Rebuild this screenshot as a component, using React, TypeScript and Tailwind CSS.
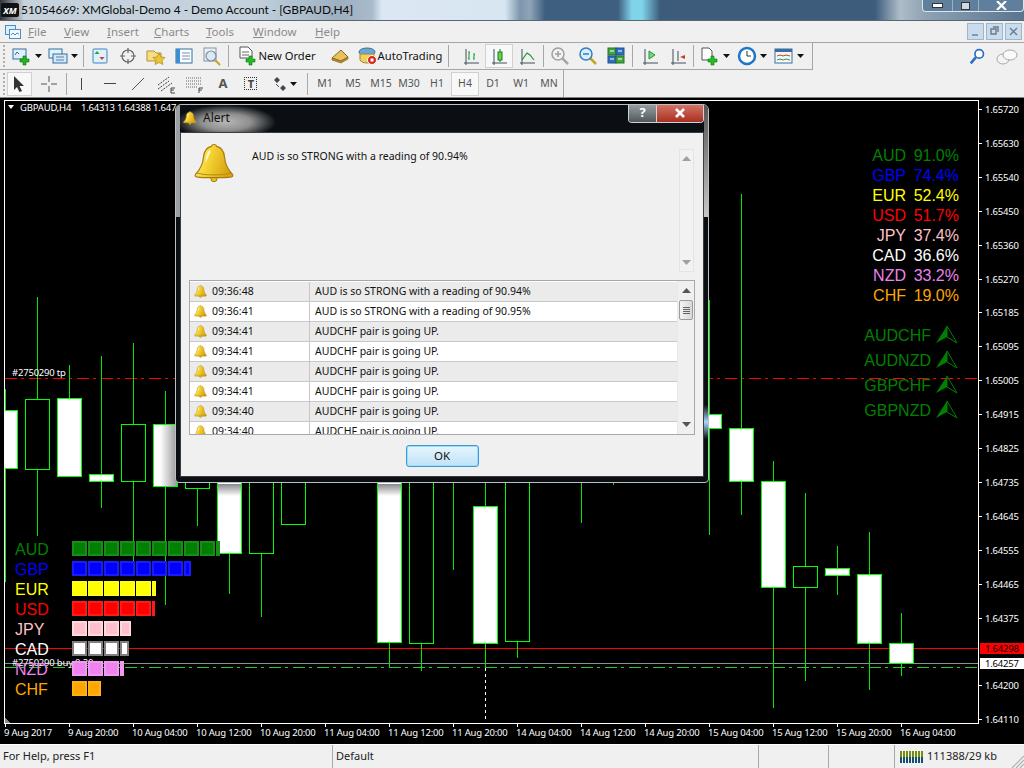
import type { ReactNode } from 'react';

const uiFont = "font-['Noto_Sans','Liberation_Sans',sans-serif]";

type Candle = [number, number, number, number, number, boolean];

// x, body top, body bottom, wick top, wick bottom, white body
const candles: Candle[] = [
  [5, 410, 468, 389, 582, true],
  [37, 399, 469, 297, 536, false],
  [69, 398, 476, 365, 476, true],
  [101, 474, 481, 356, 508, true],
  [133, 424, 481, 343, 563, false],
  [165, 424, 486, 391, 605, true],
  [197, 470, 488, 470, 526, false],
  [229, 400, 553, 400, 594, true],
  [261, 400, 553, 400, 617, false],
  [293, 400, 524, 400, 525, false],
  [389, 400, 642, 400, 668, true],
  [421, 400, 643, 400, 671, false],
  [485, 506, 643, 400, 667, true],
  [517, 400, 641, 400, 658, false],
  [709, 414, 428, 300, 535, true],
  [741, 428, 481, 194, 515, true],
  [773, 481, 587, 461, 708, true],
  [805, 566, 587, 493, 681, false],
  [837, 568, 575, 546, 595, true],
  [869, 574, 643, 532, 690, true],
  [901, 643, 663, 613, 676, true],
];

const wicksOnly: [number, number, number][] = [
  [453, 400, 570],
  [581, 400, 523],
  [613, 400, 485],
];

const prices: [string, number][] = [
  ['1.65720', 109], ['1.65630', 143], ['1.65540', 177], ['1.65450', 211], ['1.65360', 245],
  ['1.65270', 279], ['1.65185', 312], ['1.65095', 346], ['1.65005', 380], ['1.64915', 414],
  ['1.64825', 448], ['1.64735', 482], ['1.64645', 516], ['1.64555', 550], ['1.64465', 584],
  ['1.64375', 618], ['1.64200', 685], ['1.64110', 719],
];

const times: [string, number][] = [
  ['9 Aug 2017', 4], ['9 Aug 20:00', 68], ['10 Aug 04:00', 132], ['10 Aug 12:00', 196],
  ['10 Aug 20:00', 260], ['11 Aug 04:00', 324], ['11 Aug 12:00', 388], ['11 Aug 20:00', 452],
  ['14 Aug 04:00', 516], ['14 Aug 12:00', 580], ['14 Aug 20:00', 644], ['15 Aug 04:00', 708],
  ['15 Aug 12:00', 772], ['15 Aug 20:00', 836], ['16 Aug 04:00', 900],
];

const meters = [
  { name: 'AUD', end: 220, fill: '#008000', edge: '#1a8c1a', pct: '91.0%' },
  { name: 'GBP', end: 191, fill: '#0000ff', edge: '#1a1aff', pct: '74.4%' },
  { name: 'EUR', end: 156, fill: '#ffff00', edge: '#ffff1a', pct: '52.4%' },
  { name: 'USD', end: 155, fill: '#ff0000', edge: '#ff1a1a', pct: '51.7%' },
  { name: 'JPY', end: 131, fill: '#ffc0cb', edge: '#ffd8de', pct: '37.4%' },
  { name: 'CAD', end: 129, fill: '#ffffff', edge: '#808080', pct: '36.6%' },
  { name: 'NZD', end: 124, fill: '#ee82ee', edge: '#f29af2', pct: '33.2%' },
  { name: 'CHF', end: 101, fill: '#ffa500', edge: '#ffb01a', pct: '19.0%' },
];

const pairs = ['AUDCHF', 'AUDNZD', 'GBPCHF', 'GBPNZD'];

const alerts = [
  ['09:36:48', 'AUD is so STRONG with a reading of 90.94%'],
  ['09:36:41', 'AUD is so STRONG with a reading of 90.95%'],
  ['09:34:41', 'AUDCHF pair is going UP.'],
  ['09:34:41', 'AUDCHF pair is going UP.'],
  ['09:34:41', 'AUDCHF pair is going UP.'],
  ['09:34:41', 'AUDCHF pair is going UP.'],
  ['09:34:40', 'AUDCHF pair is going UP.'],
  ['09:34:40', 'AUDCHF pair is going UP.'],
];

const menus = [
  ['F', 'ile', 'w-[36px]'],
  ['V', 'iew', 'w-[43px]'],
  ['I', 'nsert', 'w-[47px]'],
  ['C', 'harts', 'w-[52px]'],
  ['T', 'ools', 'w-[47px]'],
  ['W', 'indow', 'w-[62px]'],
  ['H', 'elp', 'w-[40px]'],
];

const periods = ['M1', 'M5', 'M15', 'M30', 'H1', 'H4', 'D1', 'W1', 'MN'];

function Bell({ size }: { size: number }) {
  return (
    <svg width={size} height={size} viewBox="0 0 40 40" className="shrink-0">
      <defs>
        <linearGradient id="bellFill" x1="0" y1="0" x2="1" y2="0.3">
          <stop offset="0" stopColor="#fff3a0" />
          <stop offset="0.45" stopColor="#f6d535" />
          <stop offset="1" stopColor="#d9a412" />
        </linearGradient>
      </defs>
      <circle cx="20" cy="35.5" r="3.2" fill="#e8c030" stroke="#a67c10" strokeWidth="1" />
      <path
        d="M20 1.500c1.600 0 2.400 1 2.600 1.800C28 4.500 30 8 30.500 14c.5 6 2 11 8 17.500.8 1 .2 2-1 2.300C30 35 10 35 2.500 33.800c-1.200-.3-1.800-1.300-1-2.300C7.500 25 9 20 9.500 14 10 8 12 4.500 17.400 3.300 17.600 2.500 18.400 1.500 20 1.500z"
        fill="url(#bellFill)"
        stroke="#a67c10"
        strokeWidth="1.200"
      />
      <path d="M3 30c8 2.500 26 2.500 34 0" fill="none" stroke="#b98d14" strokeWidth="1.200" />
      <path d="M16 7c-3 2-4 6-4.500 13l5-11z" fill="#fffbe0" opacity="0.9" />
    </svg>
  );
}

function Caret() {
  return (
    <svg width="7" height="4" viewBox="0 0 7 4" className="shrink-0">
      <path d="M0 0h7L3.500 4z" fill="#111" />
    </svg>
  );
}

function Sep() {
  return <div className="w-px h-[22px] bg-[#a8a8a8] shrink-0" />;
}

function Grip() {
  return <div className="w-[2px] h-[22px] shrink-0 border-l-2 border-dotted border-[#b0b0b0]" />;
}

function Cell({ w, pressed, children }: { w: string; pressed?: boolean; children: ReactNode }) {
  return (
    <div
      className={`${w} h-[24px] shrink-0 flex items-center justify-center gap-[3px] ${
        pressed ? 'bg-[#f8f8f8] border border-[#d0d0d0]' : ''
      }`}
    >
      {children}
    </div>
  );
}

function Ico({ children, s = 20 }: { children: ReactNode; s?: number }) {
  return (
    <svg width={s} height={s} viewBox="0 0 20 20" className="shrink-0">
      {children}
    </svg>
  );
}

const greenPlus = 'M6 12h3V9h3v3h3v3h-3v3H9v-3H6z';

function PageIcon() {
  return (
    <Ico>
      <rect x="1" y="3" width="13" height="10" fill="#dff0fb" stroke="#2f6ea5" />
      <path d="M3 9l2-3 2 2" fill="none" stroke="#2f6ea5" />
      <path d={greenPlus} fill="#22b522" stroke="#0a6e0a" strokeWidth="0.600" transform="translate(2 1)" />
    </Ico>
  );
}

function ProfilesIcon() {
  return (
    <Ico>
      <rect x="1" y="3" width="13" height="9" fill="#e6f2fb" stroke="#2f6ea5" />
      <rect x="5" y="8" width="14" height="9" fill="#d5e8f8" stroke="#2f6ea5" />
      <path d="M8 11h8M8 14h8" stroke="#5a7fa5" />
    </Ico>
  );
}

function Axes({ children }: { children: ReactNode }) {
  return (
    <Ico>
      <path d="M3 17h15M5 3v16" stroke="#40505a" fill="none" />
      {children}
    </Ico>
  );
}

function Lens({ minus, dim }: { minus?: boolean; dim?: boolean }) {
  return (
    <Ico>
      <path d="M12 12l6 6" stroke={dim ? '#a8a8a8' : '#c9a227'} strokeWidth="2.500" />
      <circle cx="8" cy="8" r="6" fill={dim ? '#f2f2f2' : '#d8eefc'} stroke={dim ? '#a0a0a0' : '#2f7fc0'} strokeWidth="1.500" />
      <path d={minus ? 'M5 8h6' : 'M5 8h6M8 5v6'} stroke={dim ? '#a0a0a0' : '#2f7fc0'} strokeWidth="1.500" />
    </Ico>
  );
}

function TopRows() {
  return (
    <>
      <div className="h-[28px] shrink-0 flex items-center border-t border-[#a6a6a6]">
        <div className="h-full flex items-center border-r border-b border-[#a6a6a6] pl-[3px] w-[813px]">
          <Grip />
          <div className="w-[5px]" />
          <Cell w="w-[34px]"><PageIcon /><Caret /></Cell>
          <Cell w="w-[38px]"><ProfilesIcon /><Caret /></Cell>
          <div className="w-[1px]" />
          <Sep />
          <div className="w-[2px]" />
          <Cell w="w-[28px]">
            <Ico>
              <rect x="3" y="3" width="14" height="14" rx="1" fill="#e0f0fb" stroke="#3a86c5" />
              <path d="M7 5l2.500 3h-5z" fill="#2aa52a" />
              <path d="M12 14l2.500-3h-5z" fill="#d04020" />
            </Ico>
          </Cell>
          <Cell w="w-[28px]">
            <Ico>
              <circle cx="10" cy="10" r="6" fill="none" stroke="#666" strokeWidth="1.200" />
              <path d="M10 2v5M10 13v5M2 10h5M13 10h5" stroke="#666" strokeWidth="1.200" />
            </Ico>
          </Cell>
          <Cell w="w-[28px]">
            <Ico>
              <path d="M1 5h7l2 2h5v8H1z" fill="#f5dc85" stroke="#b5932f" />
              <path d="M13 7l2 4 4 .500-3 3 1 4-4-2-4 2 1-4-3-3 4-.500z" fill="#f0c330" stroke="#a8861d" strokeWidth="0.700" />
            </Ico>
          </Cell>
          <Cell w="w-[28px]">
            <Ico>
              <rect x="2" y="3" width="16" height="14" fill="#fff" stroke="#2f6ea5" />
              <rect x="2" y="3" width="4" height="14" fill="#3d8ed0" />
              <path d="M8 7h8M8 10h8M8 13h8" stroke="#6c93b8" />
            </Ico>
          </Cell>
          <Cell w="w-[28px]">
            <Ico>
              <rect x="2" y="2" width="12" height="13" fill="#eef2f5" stroke="#8294a5" />
              <circle cx="9" cy="10" r="5" fill="#dbe9f5" stroke="#7a8ea0" strokeWidth="1.200" />
              <path d="M13 14l5 5" stroke="#c9a227" strokeWidth="2" />
            </Ico>
          </Cell>
          <div className="w-[2px]" />
          <Sep />
          <div className="w-[4px]" />
          <Cell w="w-[88px]">
            <Ico>
              <path d="M2 1h8l4 4v7H2z" fill="#fff" stroke="#555" />
              <path d="M4 6h7M4 9h7" stroke="#666" />
              <path d={greenPlus} fill="#22c022" stroke="#0a6e0a" strokeWidth="0.600" transform="translate(2 1)" />
            </Ico>
            <span className="-ml-[3px] text-[11.200px] text-[#111] leading-none whitespace-nowrap">New Order</span>
          </Cell>
          <div className="w-[5px]" />
          <Cell w="w-[28px]">
            <Ico>
              <path d="M2 12l9-8 7 7-7 4z" fill="#e8c060" stroke="#8a6a1a" />
              <path d="M2 12l9 3 7-4v2l-7 4-9-3z" fill="#b88a30" stroke="#8a6a1a" strokeWidth="0.700" />
            </Ico>
          </Cell>
          <Cell w="w-[92px]">
            <Ico>
              <ellipse cx="9" cy="6" rx="8" ry="4" fill="#6ba8d8" stroke="#3c6e9c" />
              <path d="M2 8h14v6c-2 4-12 4-14 0z" fill="#f0cf60" stroke="#a5862a" />
              <circle cx="14" cy="14" r="4.500" fill="#d5281c" stroke="#fff" />
              <rect x="12.500" y="12.500" width="3" height="3" fill="#fff" />
            </Ico>
            <span className="-ml-[3px] text-[11.200px] text-[#111] leading-none whitespace-nowrap">AutoTrading</span>
          </Cell>
          <div className="w-[2px]" />
          <Sep />
          <div className="w-[8px]" />
          <Cell w="w-[28px]">
            <Axes><path d="M8 5v9M7 12h1M8 7h1M13 7v7M12 12h1M13 9h1" stroke="#1a9c2e" fill="none" /></Axes>
          </Cell>
          <Cell w="w-[28px]" pressed>
            <Axes><rect x="9" y="6" width="4" height="8" fill="#6fd04f" stroke="#127d22" /><path d="M11 3v3M11 14v2" stroke="#127d22" /></Axes>
          </Cell>
          <Cell w="w-[28px]">
            <Axes><path d="M5 14l5-7 3 2 4 5" stroke="#1a9c2e" fill="none" strokeWidth="1.200" /></Axes>
          </Cell>
          <div className="w-[2px]" />
          <Sep />
          <div className="w-[2px]" />
          <Cell w="w-[28px]"><Lens dim /></Cell>
          <Cell w="w-[28px]"><Lens minus /></Cell>
          <Cell w="w-[28px]">
            <Ico>
              <rect x="2" y="2" width="8" height="7" fill="#3fa83f" stroke="#2b6e2b" />
              <rect x="10" y="2" width="8" height="7" fill="#2f6fc0" stroke="#234f8a" />
              <rect x="2" y="10" width="8" height="7" fill="#2f6fc0" stroke="#234f8a" />
              <rect x="10" y="10" width="8" height="7" fill="#3fa83f" stroke="#2b6e2b" />
              <path d="M4 5h4M12 5h4M4 13h4M12 13h4" stroke="#fff" />
            </Ico>
          </Cell>
          <div className="w-[2px]" />
          <Sep />
          <div className="w-[3px]" />
          <Cell w="w-[28px]">
            <Axes><path d="M9 5l6 4-6 4z" fill="#7ed07e" stroke="#1a9c2e" /></Axes>
          </Cell>
          <Cell w="w-[28px]">
            <Axes><path d="M10 5v10" stroke="#40505a" /><path d="M17 9l-5 2 5 2z" fill="#c8401a" /></Axes>
          </Cell>
          <div className="w-[1px]" />
          <Sep />
          <div className="w-[3px]" />
          <Cell w="w-[36px]">
            <Ico>
              <path d="M2 2h7l3 3v9H2z" fill="#fff" stroke="#555" />
              <path d={greenPlus} fill="#22c022" stroke="#0a6e0a" strokeWidth="0.600" transform="translate(2 1)" />
            </Ico>
            <Caret />
          </Cell>
          <Cell w="w-[37px]">
            <Ico>
              <circle cx="10" cy="10" r="8" fill="#fff" stroke="#1d76c8" strokeWidth="2.500" />
              <path d="M10 5v5h4" stroke="#333" fill="none" />
            </Ico>
            <Caret />
          </Cell>
          <Cell w="w-[37px]">
            <Ico>
              <rect x="1" y="3" width="17" height="14" fill="#f4f8fb" stroke="#3a6ea0" />
              <rect x="1" y="3" width="17" height="3" fill="#3a6ea0" />
              <path d="M3 10l3-1 3 1 3-1 4 1" stroke="#c8401a" fill="none" />
              <path d="M3 14l3-1 3 1 3-1 4 1" stroke="#2a9a3a" fill="none" />
            </Ico>
            <Caret />
          </Cell>
        </div>
        <div className="flex-1 h-full flex items-center justify-end gap-[10px] pr-[6px]">
          <Ico s={17}>
            <circle cx="12" cy="7" r="5" fill="#fff" stroke="#2a6fc4" strokeWidth="2" />
            <path d="M8 11l-6 7" stroke="#2a6fc4" strokeWidth="3" />
          </Ico>
          <svg width="22" height="20" viewBox="0 0 22 20">
            <ellipse cx="7" cy="12" rx="6" ry="5" fill="#f4f4f4" stroke="#a8a8a8" />
            <ellipse cx="14" cy="8" rx="7" ry="5" fill="#fafafa" stroke="#a8a8a8" />
          </svg>
        </div>
      </div>
      <div className="h-[27px] shrink-0 flex items-center">
        <div className="h-full flex items-center border-r border-[#a6a6a6] pl-[3px] w-[564px] text-[10.500px] text-[#555]">
          <Grip />
          <div className="w-[4px]" />
          <Cell w="w-[25px]" pressed>
            <svg width="12" height="16" viewBox="0 0 12 16"><path d="M1 0v14l3-3 2.500 5 2.500-1-2.500-5H11z" fill="#333" /></svg>
          </Cell>
          <Cell w="w-[34px]">
            <svg width="16" height="16" viewBox="0 0 16 16"><path d="M8 0v6M8 10v6M0 8h6M10 8h6" stroke="#555" /></svg>
          </Cell>
          <div className="w-[1px]" />
          <Sep />
          <div className="w-[2px]" />
          <Cell w="w-[28px]"><div className="w-px h-[12px] bg-[#444]" /></Cell>
          <Cell w="w-[28px]"><div className="w-[12px] h-px bg-[#444]" /></Cell>
          <Cell w="w-[29px]">
            <svg width="14" height="14" viewBox="0 0 14 14"><path d="M1 13L13 1" stroke="#555" /></svg>
          </Cell>
          <Cell w="w-[27px]">
            <Ico>
              <path d="M2 11L13 3M2 15L13 7M5 17L16 9" stroke="#444" fill="none" strokeDasharray="2 1" />
              <path d="M15 14h4M15 14v5M15 16h3M15 19h4" stroke="#444" />
            </Ico>
          </Cell>
          <Cell w="w-[29px]">
            <Ico>
              <path d="M2 4h15M2 7h15M2 10h15M2 13h12" stroke="#666" strokeDasharray="1 1" />
              <path d="M15 14h4M15 14v5M15 16h3" stroke="#444" />
            </Ico>
          </Cell>
          <Cell w="w-[28px]"><span className="text-[13px] font-bold text-[#555]">A</span></Cell>
          <Cell w="w-[28px]">
            <div className="w-[13px] h-[13px] border border-dotted border-[#333] flex items-center justify-center text-[11px] font-bold text-[#444] leading-none">T</div>
          </Cell>
          <Cell w="w-[40px]">
            <svg width="14" height="14" viewBox="0 0 14 14">
              <path d="M1 3l3-3 3 3-3 3zM7 11l3-3 3 3-3 3z" fill="#445" />
              <path d="M3 7l3 3" stroke="#445" />
            </svg>
            <Caret />
          </Cell>
          <div className="w-[4px]" />
          <Sep />
          <div className="w-[8px]" />
          {periods.map((p) => (
            <Cell key={p} w="w-[28px]" pressed={p === 'H4'}>{p}</Cell>
          ))}
        </div>
      </div>
    </>
  );
}

function DashedLine({ y, color }: { y: number; color: string }) {
  const parts = [];
  for (let x = 5; x < 978; x += 24) {
    parts.push(<rect key={x} x={x} y={y} width={Math.min(12, 978 - x)} height={1} fill={color} />);
    if (x + 16 < 978) parts.push(<rect key={x + 16} x={x + 16} y={y} width={3} height={1} fill={color} />);
  }
  return <>{parts}</>;
}

function Chart() {
  const crossDots = [];
  for (let y = 668; y < 720; y += 6) {
    crossDots.push(<rect key={y} x={485} y={y} width={1} height={3} fill="#fff" />);
  }
  return (
    <svg viewBox="0 98 1024 646" width="1024" height="646" className="absolute inset-0 font-['Liberation_Sans',sans-serif]">
      <defs>
        <linearGradient id="dlgShade" x1="0" y1="0" x2="0" y2="1">
          <stop offset="0" stopColor="#888" />
          <stop offset="1" stopColor="#fff" />
        </linearGradient>
        <linearGradient id="sideShade" x1="0" y1="0" x2="1" y2="0">
          <stop offset="0" stopColor="#fff" />
          <stop offset="1" stopColor="#999" />
        </linearGradient>
      </defs>
      <g shapeRendering="crispEdges">
        <DashedLine y={378} color="#ff0000" />
        <DashedLine y={667} color="#22d022" />
        <rect x="5" y="648" width="973" height="1" fill="#ff0000" />
        <rect x="5" y="663" width="973" height="1" fill="#8a8f96" />
        {candles.map(([x, top, bot, wt, wb, white]) => (
          <g key={x}>
            <rect x={x} y={wt} width={1} height={wb - wt} fill="#00e800" />
            <rect x={x - 12} y={top} width={25} height={bot - top + 1} fill="#00ff00" />
            <rect x={x - 11} y={top + 1} width={23} height={bot - top - 1} fill={white ? '#fff' : '#000'} />
          </g>
        ))}
        {wicksOnly.map(([x, a, b]) => (
          <rect key={x} x={x} y={a} width={1} height={b - a} fill="#00e800" />
        ))}
        <rect x="218" y="484" width="23" height="12" fill="url(#dlgShade)" />
        <rect x="378" y="484" width="23" height="12" fill="url(#dlgShade)" />
        <rect x="160" y="425" width="17" height="61" fill="url(#sideShade)" />
        {crossDots}
        <rect x="0" y="98" width="4" height="640" fill="#000" />
        <rect x="4" y="100" width="975" height="1" fill="#fff" />
        <rect x="4" y="723" width="975" height="1" fill="#fff" />
        <rect x="4" y="100" width="1" height="624" fill="#fff" />
        <rect x="978" y="100" width="1" height="624" fill="#fff" />
        <path d="M5 718l6 5H5z" fill="#888" />
        {prices.map(([, y]) => (
          <rect key={y} x="979" y={y} width="3" height="1" fill="#fff" />
        ))}
        {times.map(([, x]) => (
          <rect key={x} x={x + 1} y="724" width="1" height="3" fill="#fff" />
        ))}
      </g>

      <g className={uiFont} fontSize="9.500" letterSpacing="-0.200" fill="#fff">
        <path d="M8 105h6l-3 4z" fill="#fff" />
        <text x="20" y="111">GBPAUD,H4</text>
        <text x="81" y="111">1.64313 1.64388 1.647</text>
        <text x="12" y="376">#2750290 tp</text>
        <text x="12" y="666">#2750290 buy 0.20</text>
        {prices.map(([p, y]) => (
          <text key={p} x="985" y={y + 4}>{p}</text>
        ))}
        {times.map(([t, x]) => (
          <text key={t} x={x} y="736">{t}</text>
        ))}
      </g>

      {meters.map((m, i) => {
        const y = 541 + i * 20;
        const blocks = [];
        for (let bx = 72; bx < m.end; bx += 16) {
          const w = Math.min(15, m.end - bx);
          blocks.push(
            <g key={bx} shapeRendering="crispEdges">
              <rect x={bx} y={y} width={w} height={15} fill={m.edge} />
              {w > 4 && <rect x={bx + 2} y={y + 2} width={w - 4} height={11} fill={m.fill} />}
            </g>,
          );
        }
        const ink = m.name === 'AUD' ? '#008000' : m.fill;
        return (
          <g key={m.name}>
            {blocks}
            <text x="15" y={y + 14} fontSize="16" fill={ink}>{m.name}</text>
            <text x="906" y={161 + i * 20} fontSize="16" fill={ink} textAnchor="end">{m.name}</text>
            <text x="959" y={161 + i * 20} fontSize="16" fill={ink} textAnchor="end">{m.pct}</text>
          </g>
        );
      })}

      {pairs.map((p, i) => {
        const o = i * 25;
        return (
          <g key={p}>
            <text x="931" y={341 + o} fontSize="16" fill="#008000" textAnchor="end">{p}</text>
            <path d={`M947 ${326 + o}L936 ${343 + o}L947 ${337 + o}z`} fill="#008000" />
            <path d={`M947 ${326 + o}L957 ${343 + o}L947 ${337 + o}z`} fill="none" stroke="#008000" />
          </g>
        );
      })}

      <g className={uiFont} fontSize="9.500" letterSpacing="-0.200">
        <rect x="980" y="643" width="44" height="11" fill="#ff0000" />
        <text x="985" y="652" fill="#000">1.64298</text>
        <rect x="980" y="658" width="44" height="11" fill="#fff" />
        <text x="985" y="667" fill="#000">1.64257</text>
      </g>
    </svg>
  );
}

function ScrollArrow({ up, pale }: { up?: boolean; pale?: boolean }) {
  return (
    <svg width="9" height="5" viewBox="0 0 9 5" className="shrink-0">
      <path d={up ? 'M4.500 0L9 5H0z' : 'M0 0h9L4.500 5z'} fill={pale ? '#a0a0a0' : '#555'} />
    </svg>
  );
}

function AlertDialog() {
  return (
    <div className="absolute left-[175px] top-[6px] w-[534px] h-[379px] rounded-t-[6px] rounded-b-[4px] border border-[#b8c0c4] bg-[#0b0f13] flex flex-col pl-[4px] pr-[4px] pb-[5px] overflow-hidden">
      <div className="absolute left-0 top-0 w-[100px] h-[34px] bg-[radial-gradient(closest-side,#b8b8b8_0%,#8e8e8e_50%,#0b0f1300_100%)]" />
      <div className="absolute left-0 top-0 w-[4px] h-[112px] bg-[#9a9fa3]" />
      <div className="absolute right-0 top-0 w-[4px] h-[112px] bg-[linear-gradient(#555,#c8c8c8)]" />
      <div className="absolute right-0 top-[300px] w-[4px] h-[34px] bg-[linear-gradient(#0b0f13,#a8d8ff,#0b0f13)]" />
      <div className="relative h-[27px] shrink-0 flex items-center gap-[6px] pl-[3px] pb-[2px]">
        <Bell size={14} />
        <span className={`text-[12px] text-[#111] ${uiFont}`}>Alert</span>
        <div className="absolute right-0 top-[-1px] flex h-[19px] rounded-b-[4px] overflow-hidden border border-t-0 border-[#cfd3d6]">
          <div className="w-[28px] bg-[linear-gradient(#9aa2a6,#50585c)] text-white text-[13px] font-bold flex items-center justify-center border-r border-[#cfd3d6]">?</div>
          <div className="w-[46px] bg-[linear-gradient(#d8766a,#a83020)] flex items-center justify-center">
            <svg width="12" height="10" viewBox="0 0 12 10"><path d="M2 1l8 8M10 1l-8 8" stroke="#fff" strokeWidth="2.500" /></svg>
          </div>
        </div>
      </div>
      <div className={`relative flex-1 flex flex-col bg-[#f0f0f0] border border-[#3c3c3c] text-[10.500px] text-[#111] ${uiFont}`}>
        <div className="h-[147px] shrink-0 flex items-start">
          <div className="ml-[13px] mt-[10px]"><Bell size={40} /></div>
          <div className="flex-1 ml-[18px] mt-[15px] leading-[16px]">AUD is so STRONG with a reading of 90.94%</div>
          <div className="mr-[9px] mt-[16px] w-[15px] h-[123px] bg-[#f2f2f2] border border-[#e4e4e4] flex flex-col items-center justify-between py-[6px]">
            <ScrollArrow up pale />
            <ScrollArrow pale />
          </div>
        </div>
        <div className="ml-[8px] w-[506px] h-[155px] shrink-0 border border-[#a8a8a8] bg-white flex overflow-hidden">
          <div className="flex-1 pt-[1px] min-w-0">
            {alerts.map(([time, msg], i) => (
              <div key={i} className={`h-[20px] flex border-b border-[#c8c8c8] ${i % 2 === 0 ? 'bg-[#ebebeb]' : 'bg-white'}`}>
                <div className="w-[120px] shrink-0 flex items-center gap-[5px] pl-[4px] border-r border-[#c8c8c8]">
                  <Bell size={13} />
                  <span className="pt-[1px]">{time}</span>
                </div>
                <div className="pl-[5px] pt-[1px] flex items-center whitespace-nowrap">{msg}</div>
              </div>
            ))}
          </div>
          <div className="w-[17px] shrink-0 bg-[#f0f0f0] flex flex-col items-center py-[7px] border-l border-[#e8e8e8]">
            <ScrollArrow up />
            <div className="w-[14px] h-[20px] mt-[7px] mb-auto border border-[#9a9a9a] rounded-[2px] bg-[linear-gradient(90deg,#f4f4f4,#d8d8d8)] flex flex-col gap-[1px] items-center justify-center">
              <div className="w-[7px] h-px bg-[#666]" />
              <div className="w-[7px] h-px bg-[#666]" />
              <div className="w-[7px] h-px bg-[#666]" />
              <div className="w-[7px] h-px bg-[#666]" />
            </div>
            <ScrollArrow />
          </div>
        </div>
        <div className="flex-1 flex items-start justify-center pt-[10px]">
          <div className="w-[73px] h-[22px] rounded-[3px] border border-[#3a9bd8] bg-[linear-gradient(#e6f5fd,#bfe3f7)] shadow-[inset_0_0_0_1px_#9fdcf5] flex items-center justify-center text-[11.500px] text-[#111]">OK</div>
        </div>
      </div>
    </div>
  );
}

function StatusBar() {
  return (
    <div className={`relative h-[24px] shrink-0 bg-[#f0f0f0] border-t border-white flex items-center text-[11px] text-[#222] ${uiFont}`}>
      <div className="w-[332px] pl-[3px] h-full flex items-center">For Help, press F1</div>
      <div className="w-[426px] pl-[3px] h-full flex items-center border-l border-[#a8a8a8]">Default</div>
      <div className="w-[70px] h-full border-l border-[#a8a8a8]" />
      <div className="w-[66px] h-full border-l border-[#a8a8a8]" />
      <div className="flex-1 h-full flex items-center gap-[3px] pl-[5px] border-l border-[#a8a8a8]">
        <svg width="24" height="14" viewBox="0 0 24 14" className="shrink-0" shapeRendering="crispEdges">
          {[0, 1, 2, 3, 4, 5, 6, 7].map((i) => (
            <g key={i}>
              <rect x={i * 3} y={1} width="2" height="6" fill="#7a8a10" />
              <rect x={i * 3} y={7} width="2" height="6" fill="#14506e" />
            </g>
          ))}
        </svg>
        <span className="whitespace-nowrap">111388/29 kb</span>
      </div>
      <svg width="14" height="14" viewBox="0 0 14 14" className="absolute right-0 bottom-0">
        <path d="M14 2L2 14M14 6L6 14M14 10l-4 4" stroke="#b0b0b0" strokeWidth="1.200" />
      </svg>
    </div>
  );
}

export default function App() {
  return (
    <div className={`w-[1024px] h-[768px] overflow-hidden flex flex-col bg-[#f0f0f0] ${uiFont}`}>
      <div className="relative h-[21px] shrink-0 flex items-center border-b border-[#5a6672] bg-[linear-gradient(90deg,#30343a_0px,#c6d2dc_24px,#c4d2de_250px,#9db0c0_340px,#a8bacb_372px,#dbe8f3_382px,#d8e6f2_505px,#7d95ac_520px,#8ea4b8_530px,#3f5f80_545px,#3f5f80_618px,#7fd4ea_632px,#7fd4ea_642px,#3d5c7c_660px,#3d5c7c_875px,#aebdc9_900px,#8ea2b3_925px,#5a7590_1024px)]">
        <div className="w-[18px] h-[14px] ml-[1px] rounded-[2px] bg-[#111] text-[9px] italic font-bold text-white flex items-center justify-center leading-none">XM</div>
        <span className="ml-[2px] text-[11.900px] text-[#0a0a0a] whitespace-nowrap font-['Lato','Liberation_Sans',sans-serif]">51054669: XMGlobal-Demo 4 - Demo Account - [GBPAUD,H4]</span>
        <div className="absolute right-0 top-0 h-[12px] w-[102px] flex rounded-b-[4px] border border-t-0 border-[#dde5ea] bg-[#5f7f9c]">
          <div className="w-[30px] border-r border-[#a0b0be] flex items-center justify-center"><div className="w-[11px] h-[5px] border border-[#333] bg-white" /></div>
          <div className="w-[26px] border-r border-[#a0b0be] flex items-center justify-center"><div className="w-[9px] h-[8px] border border-[#333] bg-white/70" /></div>
          <div className="flex-1 flex items-center justify-center">
            <svg width="11" height="9" viewBox="0 0 11 9"><path d="M1 0l9 9M10 0L1 9" stroke="#fff" strokeWidth="2.200" /></svg>
          </div>
        </div>
      </div>

      <div className="h-[21px] shrink-0 flex items-center text-[11.500px] text-[#8a8a8a]">
        <svg width="16" height="14" viewBox="0 0 16 14" className="ml-[5px] mr-[7px] shrink-0">
          <rect x="0.500" y="0.500" width="10" height="9" fill="#dceefa" stroke="#4a90c8" />
          <rect x="4.500" y="4.500" width="11" height="9" fill="#f2f8fd" stroke="#4a90c8" />
          <path d="M6 10l2-2 2 2 2-2 2 1" stroke="#4a90c8" fill="none" />
        </svg>
        {menus.map(([head, rest, w]) => (
          <div key={head} className={`${w} shrink-0`}>
            <span className="underline">{head}</span>
            {rest}
          </div>
        ))}
        <div className="ml-auto mr-[2px] flex gap-[2px]">
          {['M3 10h6', 'M3 4h5v5H3zM5 2h5v5', 'M3 3l7 7M10 3l-7 7'].map((d) => (
            <div key={d} className="w-[17px] h-[17px] bg-[#c9dcee] border border-[#9db6cc] flex items-center justify-center">
              <svg width="13" height="13" viewBox="0 0 13 13"><path d={d} fill="none" stroke="#6a7a88" strokeWidth="1.400" /></svg>
            </div>
          ))}
        </div>
      </div>

      <TopRows />

      <div className="relative flex-1 bg-black border-t border-[#808080]">
        <Chart />
        <AlertDialog />
      </div>

      <StatusBar />
    </div>
  );
}
